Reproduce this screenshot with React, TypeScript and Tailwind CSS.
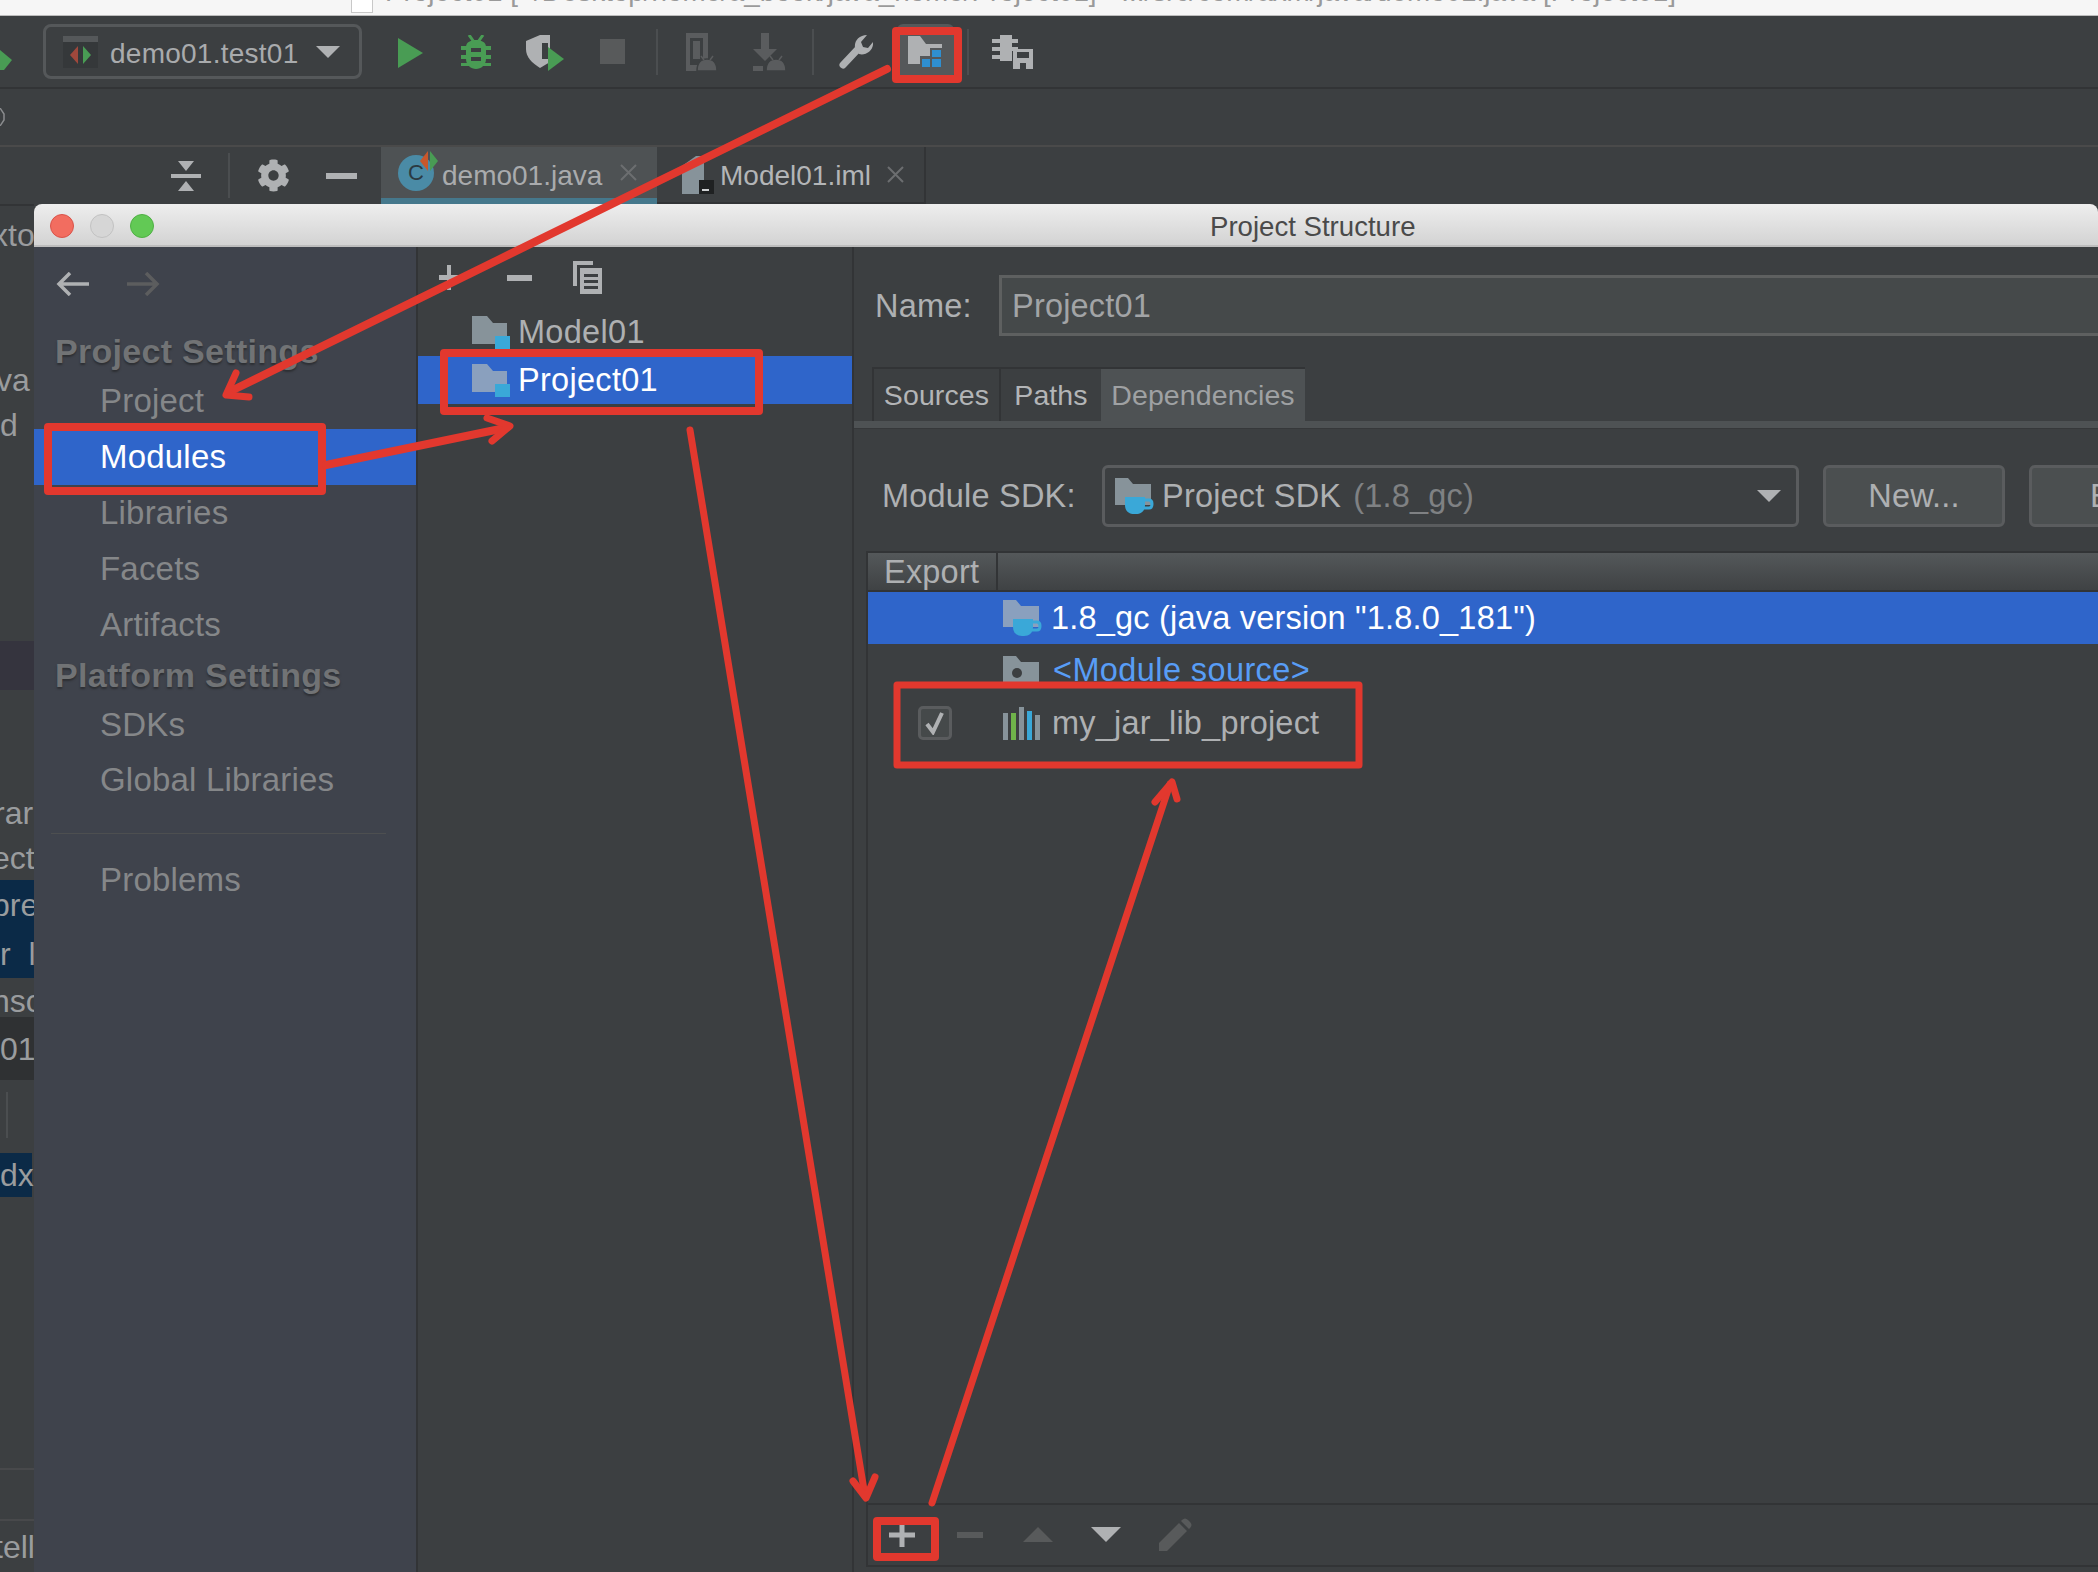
import { FaCog } from 'react-icons/fa'

const GRAY = '#afb1b3'
const DIM = '#5a5c5e'
const GREEN = '#499c54'
const BLUE = '#3aa8d8'

function ModuleFolder({ color = '#87939a' }: { color?: string }) {
  return (
    <svg width="38" height="33" viewBox="0 0 38 33" className="shrink-0">
      <path d="M0 0H15L21 7H35V28H0Z" fill={color} />
      <rect x="23" y="20" width="15" height="13" fill={BLUE} />
    </svg>
  )
}

function SdkFolder({ color = '#87939a' }: { color?: string }) {
  return (
    <svg width="40" height="36" viewBox="0 0 40 36" className="shrink-0">
      <path d="M0 0H13L18 6H36V27H0Z" fill={color} />
      <path d="M10 19H30V27C30 33 26 36 21 36H19C14 36 10 33 10 27Z" fill={BLUE} />
      <path d="M30 22H34C38 22 38 30 34 30H29" fill="none" stroke={BLUE} strokeWidth="3" />
    </svg>
  )
}

function CloseX() {
  return (
    <svg width="17" height="17" viewBox="0 0 17 17" className="shrink-0">
      <path d="M1 1L16 16M16 1L1 16" stroke="#6c6e70" strokeWidth="2" />
    </svg>
  )
}

function Toolbar() {
  return (
    <div className="h-[73px] shrink-0 border-b-2 border-[#323436] flex items-center relative">
      <svg width="12" height="20" viewBox="0 0 12 20" className="shrink-0 absolute left-0 top-[34px]">
        <path d="M0 0L12 10L4 20H0Z" fill={GREEN} />
      </svg>
      <div className="ml-[43px] w-[319px] h-[55px] shrink-0 rounded-[8px] border-[3px] border-[#55585a] flex items-center pl-[17px]">
        <svg width="35" height="32" viewBox="0 0 35 32" className="shrink-0">
          <rect width="35" height="32" fill="#35383a" />
          <rect width="35" height="6" fill="#55585a" />
          <path d="M15 10L7 19L15 28Z" fill="#a0483c" />
          <path d="M20 10L28 19L20 28Z" fill="#499c54" />
        </svg>
        <span className="ml-[12px] mt-[4px] text-[28px] text-[#a9abad] tracking-[0.25px] whitespace-nowrap">demo01.test01</span>
        <svg width="24" height="12" viewBox="0 0 24 12" className="shrink-0 ml-[17px]">
          <path d="M0 0H24L12 12Z" fill={GRAY} />
        </svg>
      </div>
      {/* run, debug, coverage, stop */}
      <svg width="25" height="30" viewBox="0 0 25 30" className="shrink-0 ml-[36px] mt-[3px]">
        <path d="M0 0L25 15L0 30Z" fill={GREEN} />
      </svg>
      <svg width="30" height="34" viewBox="0 0 30 34" className="shrink-0 ml-[38px]">
        <path d="M8 0L13 7M22 0L17 7" stroke={GREEN} strokeWidth="3" />
        <path d="M5 12C5 7 10 5 15 5C20 5 25 7 25 12V24C25 30 20 34 15 34C10 34 5 30 5 24Z" fill={GREEN} />
        <path d="M0 11H30V15H0ZM0 20H30V24H0ZM0 28H30V31H0Z" fill={GREEN} />
        <path d="M10 13H20V17H10ZM10 22H20V26H10Z" fill="#3c3f41" />
      </svg>
      <svg width="38" height="36" viewBox="0 0 38 36" className="shrink-0 ml-[35px] mt-[3px]">
        <path d="M0 6L14 0H24V27L14 33C6 28 0 22 0 14Z" fill={GRAY} />
        <path d="M16 8H22V24H16Z" fill="#3c3f41" />
        <path d="M22 12L38 24L22 36Z" fill={GREEN} />
      </svg>
      <div className="w-[25px] h-[25px] shrink-0 ml-[36px] bg-[#585a5b]" />
      <div className="w-[2px] h-[46px] shrink-0 ml-[31px] bg-[#4b4e50]" />
      <svg width="32" height="38" viewBox="0 0 32 38" className="shrink-0 ml-[28px]">
        <path d="M0 0H22V38H0ZM4 5V32H17V5Z" fill={DIM} fillRule="evenodd" />
        <path d="M7 8H14V26H7Z" fill={DIM} />
        <path d="M11 38C11 30 15 26 21 26C27 26 31 30 31 38Z" fill={DIM} stroke="#3c3f41" strokeWidth="1.5" />
        <path d="M15 23L18 27M27 23L24 27" stroke={DIM} strokeWidth="1.5" />
      </svg>
      <svg width="33" height="38" viewBox="0 0 33 38" className="shrink-0 ml-[35px]">
        <path d="M8 0H16V16H24L12 28L0 16H8ZM0 33H10V38H0Z" fill={DIM} />
        <path d="M13 38C13 30 17 26 23 26C29 26 33 30 33 38Z" fill={DIM} stroke="#3c3f41" strokeWidth="1.5" />
        <path d="M17 23L20 27M29 23L26 27" stroke={DIM} strokeWidth="1.5" />
      </svg>
      <div className="w-[2px] h-[46px] shrink-0 ml-[26px] bg-[#4b4e50]" />
      <svg width="34" height="34" viewBox="0 0 34 34" className="shrink-0 ml-[25px]">
        <path d="M4 30L20 13" stroke={GRAY} strokeWidth="7" strokeLinecap="round" />
        <path d="M16 13C15 6 20 0 28 0L22 7L24 12L29 13L34 7C35 15 27 21 20 19Z" fill={GRAY} />
      </svg>
      <div className="w-[57px] h-[56px] shrink-0 ml-[24px] rounded-[6px] bg-[#55585a] flex items-center justify-center">
        <svg width="36" height="32" viewBox="0 0 36 32" className="shrink-0">
          <path d="M0 0H12L18 8H34V12H22V20H12V28H0Z" fill={GRAY} />
          <path d="M24 14H33V21H24ZM14 23H22V31H14ZM24 23H33V31H24Z" fill="#2f8fd0" />
        </svg>
      </div>
      <div className="w-[2px] h-[46px] shrink-0 ml-[13px] bg-[#4b4e50]" />
      <svg width="41" height="34" viewBox="0 0 41 34" className="shrink-0 ml-[23px]">
        <path d="M8 0H20V26H8ZM0 4H26V8H0ZM0 12H26V16H0ZM0 20H18V24H0Z" fill={GRAY} />
        <path d="M21 14H41V34H21Z" fill={GRAY} />
        <path d="M25 17H37V23H25ZM28 28H34V34H28Z" fill="#3c3f41" />
      </svg>
    </div>
  )
}

function EditorTabs() {
  return (
    <div className="h-[57px] shrink-0 flex items-center">
      <svg width="30" height="30" viewBox="0 0 30 30" className="shrink-0 ml-[171px]">
        <path d="M7 0H23L15 10ZM0 13H30V17H0ZM15 20L23 30H7Z" fill={GRAY} />
      </svg>
      <div className="w-[2px] h-[45px] shrink-0 ml-[27px] bg-[#4b4e50]" />
      <FaCog className="shrink-0 ml-[27px] w-[33px] h-[33px] text-[#afb1b3]" />
      <div className="w-[31px] h-[6px] shrink-0 ml-[36px] bg-[#afb1b3]" />
      <div className="w-[276px] h-[57px] shrink-0 ml-[24px] bg-[#4e5254] border-b-[6px] border-[#45788c] flex items-center pl-[17px]">
        <div className="w-[36px] h-[36px] shrink-0 rounded-full bg-[#4a8ba6] relative flex items-center justify-center text-[22px] text-[#2b3a42]">
          C
          <svg width="18" height="20" viewBox="0 0 18 20" className="absolute right-[-4px] top-[-4px]">
            <path d="M8 0L0 10L8 20Z" fill="#c9572c" />
            <path d="M10 0L18 10L10 20Z" fill={GREEN} />
          </svg>
        </div>
        <span className="ml-[8px] mt-[6px] text-[28px] text-[#a9abad]">demo01.java</span>
        <div className="ml-[18px]"><CloseX /></div>
      </div>
      <div className="w-[269px] h-[57px] shrink-0 border-r-2 border-b-2 border-[#323436] flex items-center pl-[25px]">
        <svg width="32" height="38" viewBox="0 0 32 38" className="shrink-0">
          <path d="M0 10L14 0H22V38H0Z" fill="#87939a" />
          <rect x="17" y="24" width="15" height="14" fill="#1f2122" />
          <rect x="20" y="33" width="7" height="2" fill="#cfd1d3" />
        </svg>
        <span className="ml-[6px] mt-[2px] text-[28px] text-[#b3b5b7]">Model01.iml</span>
        <div className="ml-[16px]"><CloseX /></div>
      </div>
    </div>
  )
}

// the sliver of the IDE's project tree that shows left of the dialog
function TreeSliver() {
  return (
    <div className="w-[34px] shrink-0 overflow-hidden text-[32px] leading-none text-[#9a9c9e] whitespace-nowrap">
      <div className="h-[8px] border-t-2 border-[#323436]" />
      <div className="h-[46px] flex items-center ml-[-8px]">xto</div>
      <div className="h-[100px]" />
      <div className="h-[44px] flex items-center ml-[-4px]">va</div>
      <div className="h-[46px] flex items-center">d</div>
      <div className="h-[193px]" />
      <div className="h-[49px] bg-[#35343e]" />
      <div className="h-[100px]" />
      <div className="h-[45px] flex items-center ml-[-6px]">rar</div>
      <div className="h-[45px] flex items-center ml-[-8px]">ect</div>
      <div className="h-[49px] bg-[#0b2a47] flex items-center ml-[-8px] pl-[8px]">
        <span className="ml-[-8px]">pre</span>
      </div>
      <div className="h-[49px] bg-[#0b2a47] flex items-center">r&nbsp;&nbsp;l</div>
      <div className="h-[39px] flex items-end ml-[-8px]">nsc</div>
      <div className="h-[63px] bg-[#2f3133] flex items-center">01</div>
      <div className="h-[12px]" />
      <div className="h-[46px] w-[2px] ml-[6px] bg-[#4b4e50]" />
      <div className="h-[15px]" />
      <div className="h-[44px] w-[32px] bg-[#0b2a47] flex items-center">dx</div>
      <div className="h-[271px]" />
      <div className="h-[51px] border-t-2 border-[#48494b]" />
      <div className="h-[53px] border-t-2 border-[#48494b] flex items-center ml-[-6px]">telli</div>
    </div>
  )
}

function SideGroup({ label, h = 'h-[44px]' }: { label: string; h?: string }) {
  return (
    <div className={`${h} pl-[21px] flex items-center text-[34px] font-bold text-[#717375] tracking-[0.3px] [text-shadow:0_2px_2px_#2d2f33]`}>
      {label}
    </div>
  )
}

function SideItem({ label, active, h = 'h-[56px]' }: { label: string; active?: boolean; h?: string }) {
  return (
    <div
      className={`${h} pl-[66px] flex items-center text-[33px] tracking-[0.2px] ${
        active ? 'bg-[#2f65ca] text-white' : 'text-[#858789]'
      }`}
    >
      {label}
    </div>
  )
}

function Sidebar() {
  return (
    <div className="w-[382px] shrink-0 bg-[#3f434c] flex flex-col">
      <div className="h-[83px] flex items-start pt-[25px] pl-[22px] gap-[38px]">
        <svg width="33" height="24" viewBox="0 0 33 24">
          <path d="M33 12H3M14 1L3 12L14 23" fill="none" stroke={GRAY} strokeWidth="3.5" />
        </svg>
        <svg width="33" height="24" viewBox="0 0 33 24">
          <path d="M0 12H30M19 1L30 12L19 23" fill="none" stroke="#5c5d5e" strokeWidth="3.5" />
        </svg>
      </div>
      <SideGroup label="Project Settings" h="h-[43px]" />
      <SideItem label="Project" />
      <SideItem label="Modules" active />
      <SideItem label="Libraries" />
      <SideItem label="Facets" />
      <SideItem label="Artifacts" />
      <SideGroup label="Platform Settings" h="h-[45px]" />
      <SideItem label="SDKs" h="h-[54px]" />
      <SideItem label="Global Libraries" />
      <div className="h-[1px] mt-[25px] ml-[17px] mr-[30px] bg-[#4d4f50]" />
      <div className="mt-[18px]">
        <SideItem label="Problems" />
      </div>
    </div>
  )
}

function ModuleList() {
  return (
    <div className="w-[438px] shrink-0 border-l-2 border-r-2 border-[#323436] flex flex-col">
      <div className="h-[61px] flex items-center pl-[21px]">
        <svg width="20" height="25" viewBox="0 0 20 25" className="shrink-0">
          <path d="M0 10H20V15H0ZM8 0H12V25H8Z" fill={GRAY} />
        </svg>
        <div className="w-[25px] h-[6px] ml-[48px] bg-[#afb1b3]" />
        <svg width="29" height="33" viewBox="0 0 29 33" className="shrink-0 ml-[41px]">
          <path d="M0 0H20V4H4V25H0Z" fill={GRAY} />
          <path d="M7 7H29V33H7Z" fill={GRAY} />
          <path d="M11 13H25V16H11ZM11 19H25V22H11ZM11 25H25V28H11Z" fill="#3c3f41" />
        </svg>
      </div>
      <div className="h-[48px] flex items-center pl-[54px] text-[32.5px] tracking-[0.3px] text-[#aeb0b2]">
        <ModuleFolder />
        <span className="ml-[8px] mt-[1px]">Model01</span>
      </div>
      <div className="h-[48px] flex items-center pl-[54px] text-[32.5px] tracking-[0.3px] bg-[#2f65ca] text-white">
        <ModuleFolder color="#8aa0be" />
        <span className="ml-[8px] mt-[1px]">Project01</span>
      </div>
    </div>
  )
}

function ModuleEditor() {
  return (
    <div className="flex-1 min-w-0 flex flex-col text-[#aeb0b2] text-[32.5px] tracking-[0.2px]">
      <div className="h-[61px] mt-[28px] shrink-0 flex items-center">
        <span className="w-[145px] pl-[21px] mt-[2px] shrink-0">Name:</span>
        <div className="flex-1 h-full mr-[-20px] border-[3px] border-[#5e6060] bg-[#45494a] flex items-center pl-[10px] text-[#a2a4a6]">
          <span className="mt-[2px]">Project01</span>
        </div>
      </div>

      <div className="h-[54px] mt-[31px] ml-[18px] shrink-0 flex text-[28.5px] tracking-[0.1px]">
        <div className="w-[127px] border-t-2 border-l-2 border-[#323436] flex items-center justify-center text-[#b3b5b7]">Sources</div>
        <div className="w-[102px] border-t-2 border-l-2 border-[#323436] flex items-center justify-center text-[#b3b5b7]">Paths</div>
        <div className="w-[204px] bg-[#4e5254] border-t-2 border-[#323436] flex items-center justify-center text-[#9fa1a3]">Dependencies</div>
      </div>
      <div className="h-[8px] shrink-0 bg-[#4e5254] border-b border-[#36383a]" />

      <div className="h-[62px] mt-[36px] shrink-0 flex items-center">
        <span className="w-[248px] pl-[28px] mt-[1px] shrink-0 whitespace-nowrap">Module SDK:</span>
        <div className="w-[697px] h-full shrink-0 rounded-[6px] border-[3px] border-[#5a5c5e] flex items-center pl-[10px]">
          <SdkFolder />
          <span className="ml-[7px] mt-[1px]">Project SDK</span>
          <span className="ml-[12px] mt-[1px] text-[#7f8183]">(1.8_gc)</span>
          <svg width="24" height="12" viewBox="0 0 24 12" className="shrink-0 ml-auto mr-[15px]">
            <path d="M0 0H24L12 12Z" fill={GRAY} />
          </svg>
        </div>
        <div className="w-[182px] h-full ml-[24px] shrink-0 rounded-[6px] border-[3px] border-[#5a5c5e] bg-[#4b4f50] flex items-center justify-center">
          New...
        </div>
        <div className="w-[100px] h-full ml-[24px] shrink-0 rounded-[6px] border-[3px] border-[#5a5c5e] bg-[#4b4f50] flex items-center pl-[58px]">
          E
        </div>
      </div>

      <div className="mt-[24px] ml-[12px] mb-[5px] flex-1 min-h-0 flex flex-col border-l-2 border-[#323436]">
        <div className="h-[41px] shrink-0 flex items-center border-t-2 border-b-2 border-[#323436] bg-gradient-to-b from-[#54585a] to-[#3f4244]">
          <span className="w-[128px] pl-[16px] mt-[2px] shrink-0">Export</span>
          <div className="w-[2px] h-full shrink-0 bg-[#323436]" />
        </div>
        <div className="h-[52px] shrink-0 flex items-center pl-[135px] bg-[#2f65ca] text-white">
          <SdkFolder color="#8aa0be" />
          <span className="ml-[8px] mt-[1px]">1.8_gc (java version "1.8.0_181")</span>
        </div>
        <div className="h-[53px] shrink-0 flex items-center pl-[135px] text-[#589df6]">
          <svg width="37" height="28" viewBox="0 0 37 28" className="shrink-0 mb-[1px]">
            <path d="M0 0H13L18 6H36V28H0Z" fill="#87939a" />
            <circle cx="14" cy="17" r="5" fill="#3c3f41" />
          </svg>
          <span className="ml-[13px] tracking-[0.4px]">&lt;Module source&gt;</span>
        </div>
        <div className="h-[52px] shrink-0 flex items-center pl-[50px]">
          <div className="w-[34px] h-[34px] shrink-0 rounded-[5px] border-[3px] border-[#5a5c5e] bg-[#45494a] flex items-center justify-center">
            <svg width="20" height="24" viewBox="0 0 20 24">
              <path d="M2 13L8 21L17 2" fill="none" stroke={GRAY} strokeWidth="4" />
            </svg>
          </div>
          <svg width="37" height="33" viewBox="0 0 37 33" className="shrink-0 ml-[51px]">
            <rect y="6" width="5" height="27" fill="#87939a" />
            <rect x="8" y="6" width="5" height="27" fill="#6fb34a" />
            <rect x="16" width="5" height="33" fill="#87939a" />
            <rect x="24" y="4" width="5" height="29" fill={BLUE} />
            <rect x="32" y="8" width="5" height="25" fill="#87939a" />
          </svg>
          <span className="ml-[12px]">my_jar_lib_project</span>
        </div>
        <div className="flex-1" />
        <div className="h-[64px] shrink-0 flex items-center border-t-2 border-b-2 border-[#323436]">
          <svg width="26" height="24" viewBox="0 0 26 24" className="shrink-0 ml-[21px] mb-[1px]">
            <path d="M0 9.5H26V14.5H0ZM10.5 0H15.5V24H10.5Z" fill={GRAY} />
          </svg>
          <div className="w-[26px] h-[6px] shrink-0 ml-[42px] mb-[1px] bg-[#585a5b]" />
          <svg width="30" height="15" viewBox="0 0 30 15" className="shrink-0 ml-[40px] mb-[1px]">
            <path d="M15 0L30 15H0Z" fill="#585a5b" />
          </svg>
          <svg width="30" height="15" viewBox="0 0 30 15" className="shrink-0 ml-[38px] mb-[1px]">
            <path d="M0 0H30L15 15Z" fill={GRAY} />
          </svg>
          <svg width="33" height="33" viewBox="0 0 33 33" className="shrink-0 ml-[38px] mb-[1px]">
            <path d="M0 25L20 5L28 13L8 33H0ZM23 2C25 0 27 0 29 2L31 4C33 6 33 8 31 10L30 11L22 3Z" fill="#585a5b" />
          </svg>
        </div>
      </div>
    </div>
  )
}

function ProjectStructureDialog() {
  return (
    <div className="absolute left-[34px] right-0 top-[204px] bottom-0 flex flex-col bg-[#3c3f41] rounded-t-[8px] overflow-hidden">
      <div className="h-[43px] shrink-0 flex items-center pl-[16px] gap-[16px] bg-gradient-to-b from-[#eeeeee] to-[#d3d3d3] border-b-2 border-[#bdbdbd]">
        <div className="w-[24px] h-[24px] mt-[2px] rounded-full bg-[#f26d60] border border-[#d9534a]" />
        <div className="w-[24px] h-[24px] mt-[2px] rounded-full bg-[#d6d6d6] border border-[#c2c2c2]" />
        <div className="w-[24px] h-[24px] mt-[2px] rounded-full bg-[#62c955] border border-[#4fb044]" />
        <span className="ml-[1040px] mt-[4px] text-[27.6px] text-[#4a4a4a] whitespace-nowrap">Project Structure</span>
      </div>
      <div className="flex-1 min-h-0 flex">
        <Sidebar />
        <ModuleList />
        <ModuleEditor />
      </div>
    </div>
  )
}

// red boxes and arrows drawn on top of the screenshot
function Annotations() {
  const red = '#e2382e'
  return (
    <svg viewBox="0 0 2098 1572" className="absolute inset-0 w-full h-full pointer-events-none">
      <g fill="none" stroke={red} strokeLinejoin="round" strokeLinecap="round">
        <rect x="896" y="31" width="62" height="48" strokeWidth="8" />
        <rect x="48" y="427" width="274" height="64" strokeWidth="8" />
        <rect x="444" y="353" width="315" height="58" strokeWidth="8" />
        <rect x="897" y="685" width="462" height="80" strokeWidth="7" />
        <rect x="877" y="1521" width="58" height="36" strokeWidth="8" />

        <path d="M887 69L229 392" strokeWidth="8" />
        <path d="M236 373L226 395L249 397" strokeWidth="7" />

        <path d="M326 465L505 428" strokeWidth="8" />
        <path d="M487 418L510 426L492 441" strokeWidth="7" />

        <path d="M690 430L865 1496" strokeWidth="7" />
        <path d="M853 1481L866 1498L875 1477" strokeWidth="7" />

        <path d="M932 1503L1170 784" strokeWidth="7" />
        <path d="M1155 802L1172 782L1177 799" strokeWidth="7" />
      </g>
    </svg>
  )
}

export default function App() {
  return (
    <div className="relative w-[2098px] h-[1572px] overflow-hidden bg-[#3c3f41] flex flex-col font-['Liberation_Sans',Arial,sans-serif]">
      <div className="h-[16px] shrink-0 bg-[#f6f6f6] border-b border-[#bcbcbc] overflow-hidden flex items-end pl-[351px] pb-[9px]">
        <div className="w-[22px] h-[24px] shrink-0 bg-white border border-[#c8c8c8] mb-[-7px]" />
        <span className="ml-[12px] text-[27.8px] leading-[28px] text-[#9a9a9a] whitespace-nowrap">
          Project01 [~/Desktop/home/a_book/java_home/Project01] - .../src/com/axm/java/demo01.java [Project01]
        </span>
      </div>
      <Toolbar />
      <div className="h-[58px] shrink-0 border-b-2 border-[#4a4a4a] flex items-center">
        <svg width="5" height="18" viewBox="0 0 5 18" className="shrink-0">
          <path d="M0 0L4 6V12L0 18" fill="none" stroke="#8a8c8e" strokeWidth="1.5" />
        </svg>
      </div>
      <EditorTabs />
      <div className="flex-1 min-h-0 flex">
        <TreeSliver />
      </div>
      <ProjectStructureDialog />
      <Annotations />
    </div>
  )
}
